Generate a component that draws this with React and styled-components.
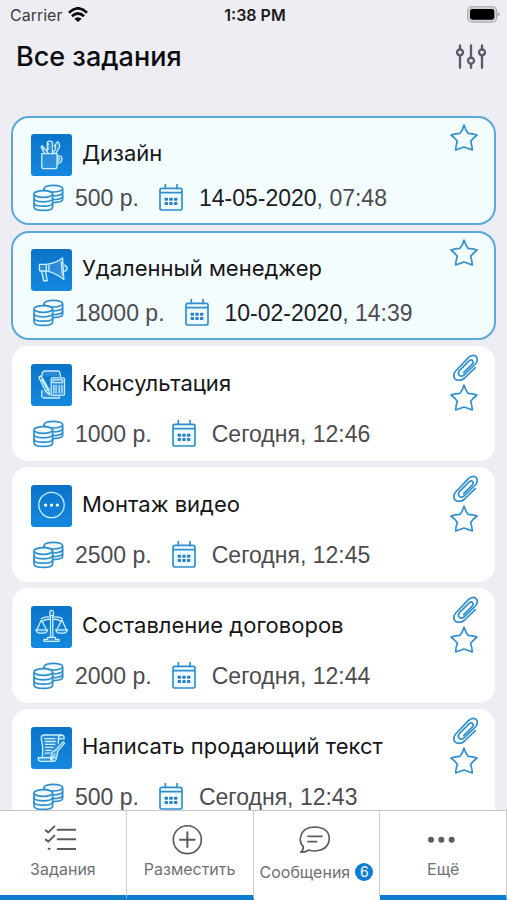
import React, { useState } from 'react';
import styled, { createGlobalStyle, css } from 'styled-components';

const tasks = [
  { id: 1, title: 'Дизайн', icon: 'mug', price: '500 р.', date: '14-05-2020', time: '07:48', pinned: true },
  { id: 2, title: 'Удаленный менеджер', icon: 'megaphone', price: '18000 р.', date: '10-02-2020', time: '14:39', pinned: true },
  { id: 3, title: 'Консультация', icon: 'consult', price: '1000 р.', date: 'Сегодня', time: '12:46', attachment: true },
  { id: 4, title: 'Монтаж видео', icon: 'other', price: '2500 р.', date: 'Сегодня', time: '12:45', attachment: true },
  { id: 5, title: 'Составление договоров', icon: 'scales', price: '2000 р.', date: 'Сегодня', time: '12:44', attachment: true },
  { id: 6, title: 'Написать продающий текст', icon: 'scroll', price: '500 р.', date: 'Сегодня', time: '12:43', attachment: true },
];

// category icons share a 126x126 grid
const categoryIcons = {
  mug: (
    <>
      <path d="M33 59H80V98Q80 105 73 105H41Q33 105 33 98Z" />
      <path d="M80 66H87Q96 67 95 77Q94 88 80 91M80 73H85Q89 77 85 83L80 85" />
      <path d="M41 58L31 38L35 35L54 58M37 41V47M50 50V23Q58 18 66 23V58M50 30H56M50 37H56M50 44H56" />
      <path d="M67 58L76 43Q72 30 82 22Q92 32 85 44L76 58M71 32L77 43" />
    </>
  ),
  megaphone: (
    <>
      <path d="M26 46H47V66H28Q26 66 26 63Z" />
      <path d="M47 46Q75 43 97 26L101 92Q75 72 47 66" />
      <path d="M101 48Q111 50 111 58Q110 66 102 67" />
      <path d="M32 66L39 96H50L45 66M55 48V65M93 36L96 80" />
    </>
  ),
  consult: (
    <>
      <path d="M33 36Q33 20 44 20H84Q90 21 91 38M33 78V99Q35 103 41 103H88V98" />
      <path d="M24 39L31 35L55 76L57 93L45 83ZM32 45L51 78M45 83L55 76" />
      <path d="M64 41H100Q103 41 103 45V91Q103 95 99 95H65Q62 95 62 91V45ZM68 47H97V56H68Z" />
      <path d="M70 63V89M77 63V89M87 63V89M95 63V89" />
    </>
  ),
  other: (
    <>
      <circle cx="63" cy="60" r="39" fill="none" />
      <g fill="#fff" stroke="none">
        <circle cx="45" cy="60" r="5" />
        <circle cx="63" cy="60" r="5" />
        <circle cx="81" cy="60" r="5" />
      </g>
    </>
  ),
  scales: (
    <>
      <path d="M60 28V94M67 28V94M58 17Q58 12 63 12Q69 12 69 17V28H58ZM51 95H75V101H86V107H40V101H51Z" />
      <path fill="none" d="M58 33Q44 29 31 38M69 33Q83 29 97 38M60 40Q46 37 36 45M67 40Q81 37 91 45" />
      <path fill="none" d="M32 41L18 72M32 41L48 72M95 41L79 72M95 41L109 72" />
      <path d="M15 72H51Q48 82 40 82H26Q18 82 15 72ZM76 72H112Q109 82 101 82H87Q79 82 76 72Z" />
    </>
  ),
  scroll: (
    <>
      <path d="M94 23H39Q29 24 32 38Q39 68 34 93H22Q22 104 32 104H70Q77 103 79 92M34 93H62Q63 103 70 104" />
      <path d="M94 23Q103 24 102 35H84Q84 24 94 23M84 35V50" />
      <path d="M40 34H75M42 43H76M43 52H75M44 61H69M44 70H64M43 79H60" />
      <path d="M103 48L82 73L80 88L59 100L65 76L77 68L98 44ZM59 100L74 80" />
    </>
  ),
};

const CoinsIcon = () => (
  <svg width="31" height="28" viewBox="0 0 93 84" fill="#f0fbff" stroke="#2f8fcd" strokeWidth="5">
    <path d="M33 14V46Q34 55 61 56Q89 55 89 46V14" />
    <ellipse cx="61" cy="14" rx="28" ry="10" />
    <path fill="none" d="M56 36C76 36 89 32 89 25M56 47C76 47 89 43 89 36" />
    <path d="M3 30V68C3 83 59 83 59 68V30" />
    <ellipse cx="31" cy="30" rx="28" ry="10" />
    <path fill="none" d="M3 43C3 57 59 57 59 43M3 56C3 70 59 70 59 56" />
  </svg>
);

const CalendarIcon = () => (
  <svg width="24" height="28" viewBox="0 0 72 84" fill="#f0fbff" stroke="#2f8fcd" strokeWidth="5">
    <rect x="3" y="13" width="66" height="65" rx="5" />
    <path d="M3 26H69M19 0V16M54 0V16" />
    <g fill="#2581c6" stroke="none">
      {[41, 54].map((y) =>
        [17, 31, 45].map((x) => <rect key={`${x}${y}`} x={x} y={y} width="10" height="9" rx="2" />)
      )}
    </g>
  </svg>
);

const StarIcon = () => (
  <svg width="28" height="27" viewBox="0 0 84 81" fill="none" stroke="#2f8fcd" strokeWidth="5" strokeLinejoin="round">
    <path d="M42 3Q46 17 54 28Q68 28 81 33Q71 41 62 52Q66 65 67 78Q55 73 42 69Q30 73 17 78Q17 65 22 52Q14 41 3 33Q16 28 30 28Q39 17 42 3Z" />
  </svg>
);

const ClipIcon = () => (
  <svg width="26" height="27" viewBox="0 0 78 81" fill="none" stroke="#2f8fcd" strokeWidth="5" strokeLinecap="round">
    <path d="M70 41L38 72Q24 84 10 76Q0 64 11 51L49 11Q62 -1 72 7Q81 17 70 30L36 63Q28 69 22 64Q16 57 23 49L52 20Q58 15 62 20Q66 25 60 31L35 56" />
  </svg>
);

const SlidersIcon = () => (
  <svg width="30" height="25" viewBox="0 0 90 75" fill="none" stroke="#5d5a66" strokeWidth="7" strokeLinecap="round">
    <path d="M12 4V16M12 34V71M45 4V42M45 60V71M78 4V16M78 34V71" />
    <circle cx="12" cy="25" r="9" />
    <circle cx="45" cy="50" r="9" />
    <circle cx="78" cy="25" r="9" />
  </svg>
);

const WifiIcon = () => (
  <svg width="20" height="15" viewBox="0 0 60 45" fill="none" stroke="#0b0b0c" strokeWidth="8">
    <path d="M3 17Q30 -9 57 17M12 28Q30 11 48 28" />
    <path d="M19 35Q30 26 41 35L30 45Z" fill="#0b0b0c" stroke="none" />
  </svg>
);

const BatteryIcon = () => (
  <svg width="33" height="17" viewBox="0 0 99 51">
    <rect x="2" y="2" width="87" height="46" rx="13" fill="#d4d4d8" stroke="#b2b2b6" strokeWidth="4" />
    <rect x="9" y="9" width="73" height="32" rx="7" fill="#000" />
    <path d="M92 19Q98 20 98 25Q98 30 92 31Z" fill="#a9a9ad" />
  </svg>
);

const navItems = [
  {
    id: 'tasks',
    label: 'Задания',
    icon: (
      <path d="M2 16L10 22L28 4M2 44L10 50L28 32M38 14H92M38 43H92M38 72H92M11 71H14" strokeWidth="6" />
    ),
  },
  {
    id: 'add',
    label: 'Разместить',
    icon: (
      <>
        <circle cx="46" cy="44" r="42" />
        <path d="M46 22V66M24 44H68" strokeWidth="6" />
      </>
    ),
  },
  {
    id: 'messages',
    label: 'Сообщения',
    count: 6,
    icon: <path d="M13 65Q3 56 4 40Q9 6 48 6Q90 8 91 41Q89 75 48 78Q37 78 29 75Q19 83 5 81Q13 76 13 65ZM27 34H69M27 50H53" />,
  },
  {
    id: 'more',
    label: 'Ещё',
    icon: (
      <g fill="#5c5c60" stroke="none">
        <circle cx="15" cy="44" r="9" />
        <circle cx="46" cy="44" r="9" />
        <circle cx="77" cy="44" r="9" />
      </g>
    ),
  },
];

const App = () => {
  const [active, setActive] = useState('messages');
  const [favorites, setFavorites] = useState([]);

  const toggleFavorite = (id) => {
    setFavorites((prev) => (prev.includes(id) ? prev.filter((f) => f !== id) : [...prev, id]));
  };

  return (
    <Screen>
      <GlobalStyle />
      <StatusBar>
        <Carrier>
          Carrier <WifiIcon />
        </Carrier>
        <Clock>1:38 PM</Clock>
        <Battery>
          <BatteryIcon />
        </Battery>
      </StatusBar>
      <Header>
        <Heading>Все задания</Heading>
        <IconButton type="button" aria-label="Фильтр">
          <SlidersIcon />
        </IconButton>
      </Header>
      <TaskList>
        {tasks.map((task) => (
          <Card key={task.id} $pinned={task.pinned}>
            <CardHead>
              <CardTitle>
                <Category viewBox="0 0 126 126">{categoryIcons[task.icon]}</Category>
                <h2>{task.title}</h2>
              </CardTitle>
              <Side>
                {task.attachment && <ClipIcon />}
                <IconButton
                  type="button"
                  aria-label="В избранное"
                  aria-pressed={favorites.includes(task.id)}
                  onClick={() => toggleFavorite(task.id)}
                >
                  <StarIcon />
                </IconButton>
              </Side>
            </CardHead>
            <Meta>
              <CoinsIcon />
              <Price>{task.price}</Price>
              <CalendarIcon />
              <When>
                {task.pinned ? <FullDate>{task.date}</FullDate> : task.date}, {task.time}
              </When>
            </Meta>
          </Card>
        ))}
      </TaskList>
      <Nav>
        {navItems.map((item) => (
          <NavLink
            key={item.id}
            href={`#${item.id}`}
            $active={active === item.id}
            onClick={() => setActive(item.id)}
          >
            <NavIcon viewBox="0 0 93 90">{item.icon}</NavIcon>
            <NavLabel>
              {item.label}
              {item.count && <Count>{item.count}</Count>}
            </NavLabel>
          </NavLink>
        ))}
      </Nav>
    </Screen>
  );
};

const GlobalStyle = createGlobalStyle`
  * {
    box-sizing: border-box;
  }

  body {
    margin: 0;
    background: #eeedf3;
    font-family: Inter, 'Liberation Sans', sans-serif;
  }

  svg {
    display: block;
    flex-shrink: 0;
  }
`;

const Screen = styled.div`
  height: 100vh;
  display: flex;
  flex-direction: column;
`;

const StatusBar = styled.div`
  display: grid;
  grid-template-columns: 1fr auto 1fr;
  align-items: center;
  height: 29px;
  padding: 0 7px 0 10px;
  font-size: 16px;
  color: #3c3c40;
`;

const Carrier = styled.div`
  display: flex;
  align-items: center;
  gap: 6px;
`;

const Clock = styled.div`
  font-weight: 600;
  color: #1b1b1d;
`;

const Battery = styled.div`
  justify-self: end;
`;

const Header = styled.header`
  display: flex;
  justify-content: space-between;
  align-items: center;
  height: 55px;
  padding: 0 21px 0 16px;
`;

const Heading = styled.h1`
  margin: 0;
  font-size: 27px;
  font-weight: 500;
  color: #0c0c0e;
`;

const IconButton = styled.button`
  padding: 0;
  border: none;
  background: none;
  cursor: pointer;
`;

const TaskList = styled.main`
  flex: 1;
  min-height: 0;
  display: flex;
  flex-direction: column;
  gap: 6px;
  padding-top: 32px;
  overflow-y: auto;
  scrollbar-width: none;
`;

const Card = styled.article`
  flex-shrink: 0;
  margin: 0 12px;
  padding: 8px 17px 13px 19px;
  border-radius: 16px;
  background: #fff;

  ${({ $pinned }) =>
    $pinned &&
    css`
      margin: 0 11px;
      padding: 6px 16px 11px 18px;
      border: 2px solid #5aa9d8;
      border-radius: 18px;
      background: #f3fcff;
    `}
`;

const CardHead = styled.div`
  display: flex;
  justify-content: space-between;
  align-items: flex-start;
`;

const CardTitle = styled.div`
  display: flex;
  align-items: center;
  gap: 10px;
  padding-top: 10px;

  & h2 {
    margin: 0;
    padding-bottom: 4px;
    font-size: 22px;
    font-weight: 400;
    line-height: 28px;
    color: #161618;
  }
`;

const Category = styled.svg`
  width: 41px;
  height: 42px;
  border-radius: 3px;
  background: linear-gradient(#0b74c9, #1488df);
  fill: rgba(255, 255, 255, 0.12);
  stroke: #c9efff;
  stroke-width: 4;
  stroke-linejoin: round;
`;

const Side = styled.div`
  display: flex;
  flex-direction: column;
  align-items: flex-end;
  gap: 3px;
  padding-bottom: 1px;
`;

const Meta = styled.div`
  display: flex;
  align-items: center;
  height: 28px;
  margin-top: 8px;
  padding-left: 2px;
  font-family: 'Liberation Sans', Arial, sans-serif;
  font-size: 23px;
  color: #4c4c4f;
`;

const Price = styled.span`
  margin: 0 20px 0 11px;
`;

const When = styled.span`
  margin-left: 16px;
`;

const FullDate = styled.span`
  color: #1c1c1e;
`;

const Nav = styled.nav`
  display: grid;
  grid-template-columns: repeat(4, 1fr);
  height: 90px;
  border-top: 1px solid #c4c4c8;
  background: #fff;
`;

const NavLink = styled.a`
  display: flex;
  flex-direction: column;
  align-items: center;
  gap: 5px;
  padding-top: 14px;
  border-right: 1px solid #cfcfd3;
  border-bottom: 5px solid ${({ $active }) => ($active ? '#fff' : '#0d7dd0')};
  text-decoration: none;
  color: #707074;
`;

const NavIcon = styled.svg`
  width: 31px;
  height: 30px;
  margin-right: 4px;
  fill: none;
  stroke: #5c5c60;
  stroke-width: 5;
  stroke-linecap: round;
  stroke-linejoin: round;
`;

const NavLabel = styled.span`
  display: flex;
  align-items: center;
  gap: 5px;
  font-size: 16px;
  line-height: 18px;
`;

const Count = styled.span`
  width: 18px;
  height: 18px;
  margin: 3px 0;
  border-radius: 50%;
  background: #0d7dd0;
  color: #fff;
  font-size: 14px;
  text-align: center;
`;

export default App;
